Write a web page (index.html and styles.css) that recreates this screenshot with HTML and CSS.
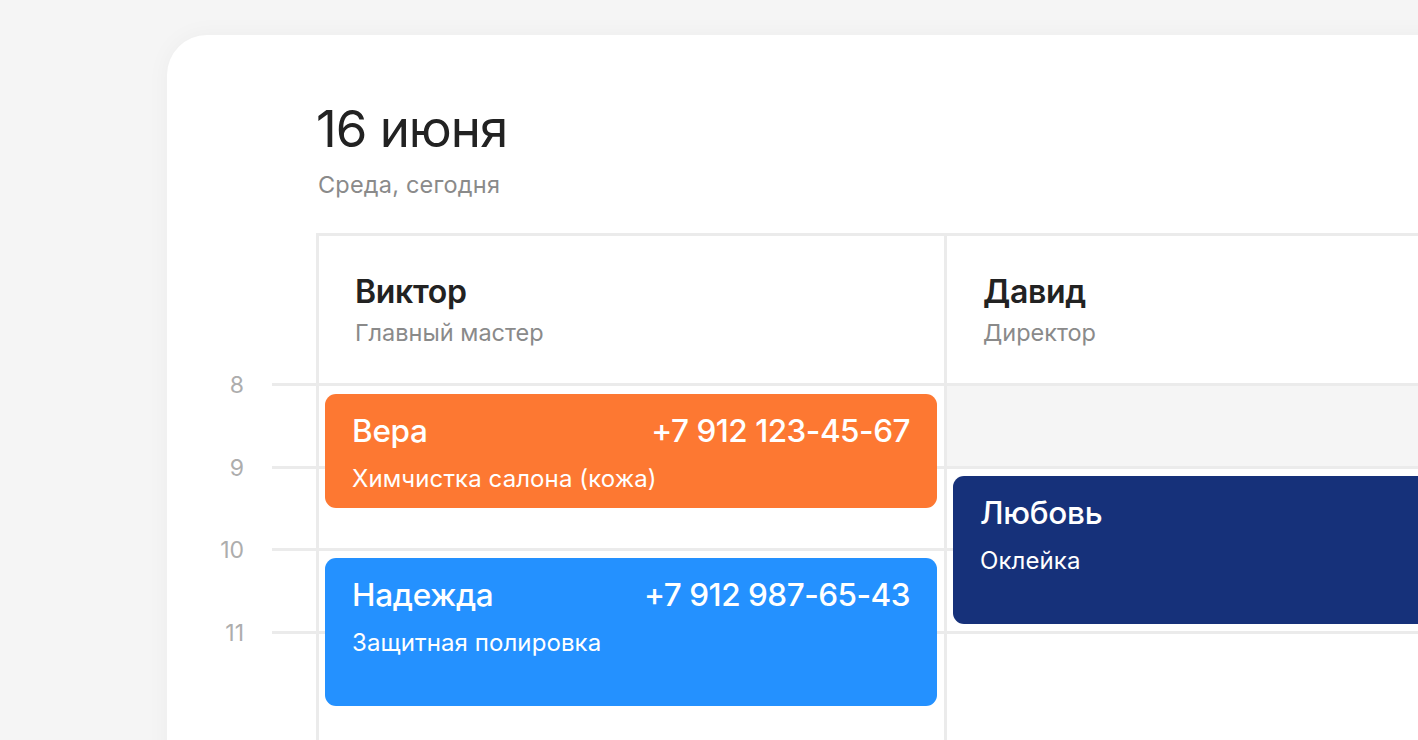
FILE: index.html
```html
<!DOCTYPE html>
<html lang="ru">
<head>
  <meta charset="UTF-8" />
  <meta name="viewport" content="width=device-width, initial-scale=1.0"/>
  <title>Расписание</title>
  <link rel="stylesheet" href="styles.css">
</head>
<body>
  <div class="card">
    <div class="day-head">
      <h1 class="day-title">16 июня</h1>
      <div class="day-sub">Среда, сегодня</div>
    </div>

    <div class="board">
      <div class="gutter">
        <div class="gutter-top"></div>
        <div class="tick"><span>8</span><i></i></div>
        <div class="tick"><span>9</span><i></i></div>
        <div class="tick"><span>10</span><i></i></div>
        <div class="tick"><span>11</span><i></i></div>
      </div>

      <div class="col col-first">
        <div class="col-head">
          <div class="person">Виктор</div>
          <div class="role">Главный мастер</div>
        </div>
        <div class="slots">
          <div class="slot"></div>
          <div class="slot"></div>
          <div class="slot"></div>
          <div class="slot open"></div>
          <div class="slot open"></div>

          <div class="event orange" style="top: 8px; height: 114px;">
            <div class="event-row">
              <div class="client">Вера</div>
              <div class="phone">+7 912 123-45-67</div>
            </div>
            <div class="service">Химчистка салона (кожа)</div>
          </div>

          <div class="event blue" style="top: 172px; height: 148px;">
            <div class="event-row">
              <div class="client">Надежда</div>
              <div class="phone">+7 912 987-65-43</div>
            </div>
            <div class="service">Защитная полировка</div>
          </div>
        </div>
      </div>

      <div class="col col-last">
        <div class="col-head">
          <div class="person">Давид</div>
          <div class="role">Директор</div>
        </div>
        <div class="slots">
          <div class="slot busy"></div>
          <div class="slot"></div>
          <div class="slot"></div>
          <div class="slot open"></div>
          <div class="slot open"></div>

          <div class="event navy" style="top: 90px; height: 148px;">
            <div class="event-row">
              <div class="client">Любовь</div>
            </div>
            <div class="service">Оклейка</div>
          </div>
        </div>
      </div>
    </div>
  </div>
</body>
</html>
```

FILE: styles.css
```css
* {
  box-sizing: border-box;
}
html, body {
  margin: 0;
  padding: 0;
  height: 100%;
  overflow: hidden;
  background: #f5f5f5;
  font-family: Inter, Roboto, "Liberation Sans", sans-serif;
  color: #222;
}
body {
  padding: 35px 0 0 167px;
}
.card {
  width: calc(100% + 60px);
  min-height: 900px;
  background: #fff;
  border-radius: 40px 0 0 0;
  box-shadow: 0 0 24px rgba(0, 0, 0, 0.04);
}
.day-head {
  padding: 64px 0 0 149px;
}
.day-title {
  margin: 0;
  font-size: 51px;
  font-weight: 400;
  line-height: 60px;
  letter-spacing: -1px;
  color: #222;
}
.day-sub {
  margin-top: 14px;
  padding-left: 2px;
  font-size: 23.5px;
  line-height: 24px;
  letter-spacing: 0.2px;
  color: #8a8a8a;
}
.board {
  display: flex;
  margin-top: 36px;
}
.gutter {
  width: 149px;
  flex-shrink: 0;
}
.gutter-top {
  height: 150px;
}
.tick {
  display: flex;
  height: 82.5px;
}
.tick span {
  width: 105px;
  padding-right: 28px;
  margin-top: -12px;
  height: 28px;
  line-height: 28px;
  text-align: right;
  font-size: 23px;
  color: #adadad;
}
.tick i {
  flex: 1;
  border-top: 3px solid #ebebeb;
}
.col {
  border-top: 3px solid #ebebeb;
  border-left: 3px solid #ebebeb;
}
.col-first {
  width: 628px;
  flex-shrink: 0;
}
.col-last {
  flex: 1;
}
.col-head {
  height: 150px;
  padding: 38px 0 0 36px;
  border-bottom: 3px solid #ebebeb;
}
.person {
  font-size: 32px;
  font-weight: 600;
  line-height: 36px;
  letter-spacing: -0.3px;
  color: #222;
}
.role {
  margin-top: 9px;
  font-size: 23.5px;
  line-height: 28px;
  color: #8a8a8a;
}
.slots {
  position: relative;
}
.slot {
  height: 82.5px;
  border-bottom: 3px solid #ebebeb;
}
.slot.open {
  border-bottom: 0;
}
.slot.busy {
  background: #f5f5f5;
}
.event {
  position: absolute;
  left: 6px;
  right: 7px;
  padding: 20px 27px 0 27px;
  border-radius: 11px;
  color: #fff;
}
.col-last .event {
  right: -20px;
}
.orange {
  background: #fd7832;
}
.blue {
  background: #2491ff;
}
.navy {
  background: #16317a;
}
.event-row {
  display: flex;
  justify-content: space-between;
  align-items: baseline;
}
.client {
  font-size: 31.5px;
  font-weight: 500;
  line-height: 34px;
  letter-spacing: -0.3px;
}
.phone {
  font-size: 31.5px;
  font-weight: 500;
  line-height: 34px;
  letter-spacing: -0.5px;
}
.service {
  margin-top: 17px;
  font-size: 24px;
  line-height: 28px;
  letter-spacing: 0.1px;
}
```
